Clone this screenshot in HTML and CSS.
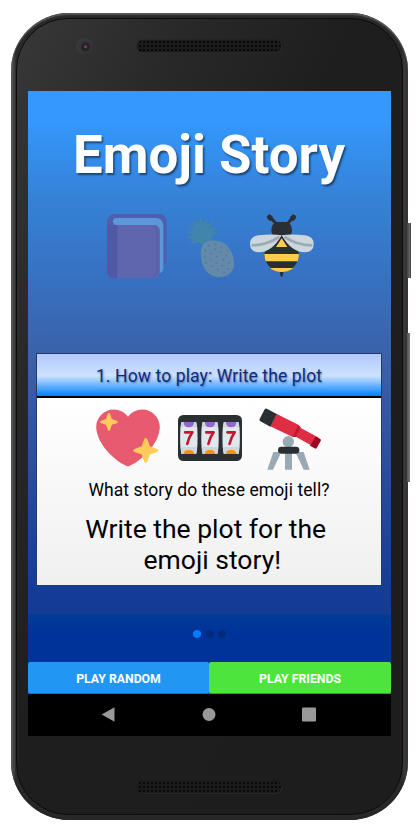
FILE: index.html
```html
<!DOCTYPE html>
<html lang="en">
<head>
<meta charset="utf-8">
<title>Emoji Story</title>
<link rel="stylesheet" href="styles.css">
</head>
<body>
<div class="phone">
  <span class="side power"></span>
  <span class="side volume"></span>
  <div class="face">
    <div class="top-bezel"><span class="camera"></span><span class="speaker"></span></div>
    <main class="screen">
      <section class="page">
        <h1>Emoji Story</h1>
        <div class="story">
          <svg viewBox="30 42 192 192">
            <path fill="#4e5fae" d="M62 42H190Q215 42 215 67V175Q215 194 202 200L190 210L54 234Q36 232 36 212V68Q36 42 62 42Z"/>
            <path fill="#5b98da" d="M65 54H181Q205 54 205 78V203Q205 218 188 221L192 90Q192 75 177 75H65Q54 75 54 65Q54 54 65 54Z"/>
            <path fill="#5f66ae" d="M54 75H172Q195 75 195 94V212Q195 234 172 234H56Q36 234 36 214V70Q40 75 54 75Z"/>
            <path fill="#5059a5" d="M36 70Q42 76 67 76V234H56Q36 234 36 214Z"/>
            <path fill="none" stroke="#555da6" stroke-width="4" d="M182 82Q187 88 187 95V211Q187 225 173 230"/>
          </svg>
          <svg viewBox="248.500 42 192 192">
            <path fill="#4184ac" d="M313 44L324 69L339 50L334 74L358 62L344 83L372 83L350 94L372 99L351 107L348 122L325 137L309 127L280 134L297 120L273 112L296 104L268 96L294 92L269 77L298 83L282 56L305 72L299 54L313 68Z"/>
            <path fill="#648aaa" d="M325 132C339 117 375 119 394 135C411 151 421 182 415 203C408 224 389 232 367 231C345 229 330 214 322 193C315 171 314 146 325 132Z"/>
            <g fill="none" stroke="#587ba2" stroke-width="5" stroke-linecap="round" stroke-dasharray="3 17"><path d="M340 137L402 170M329 151L405 190M327 169L402 208M332 188L390 220M360 132L397 152"/></g>
          </svg>
          <svg viewBox="465 42 192 192">
            <g fill="none" stroke="#292f33" stroke-width="9" stroke-linecap="round"><path d="M548 73Q538 68 532 58M573 73Q583 68 588 58"/></g>
            <ellipse cx="525" cy="53" rx="8" ry="10" transform="rotate(-35 525 53)" fill="#292f33"/>
            <ellipse cx="594" cy="53" rx="8" ry="10" transform="rotate(35 594 53)" fill="#292f33"/>
            <path fill="#292f33" d="M544 66H576Q591 72 591 91Q591 107 576 110H544Q529 107 529 90Q529 72 544 66ZM554 211H566L564 226Q560 236 556 226Z"/>
            <path fill="#292f33" d="M560 106L607 149Q618 167 606 187Q592 216 560 216Q528 216 514 187Q502 167 513 149Z"/>
            <path fill="#ffcc4d" d="M560 115L577 141H543ZM508 162H612Q612 174 608 184H512Q508 174 508 162ZM525 204H595Q581 216 560 216Q539 216 525 204Z"/>
            <path fill="#ccd6dd" d="M560 106Q531 101 491 106Q465 109 465 132Q465 156 491 157Q530 158 560 106ZM560 106Q589 101 630 106Q656 109 656 132Q656 156 630 157Q590 158 560 106Z"/>
            <path fill="none" stroke="#99aab5" stroke-width="8" stroke-linecap="round" d="M473 136Q515 135 550 112M648 136Q606 135 571 112"/>
          </svg>
        </div>
        <article class="card">
          <h2>1. How to play: Write the plot</h2>
          <div class="card-body">
            <div class="prompt">
              <svg viewBox="0 0 36 36">
                <path fill="#e75a70" d="M35.885 11.833c0-5.45-4.418-9.868-9.867-9.868-3.308 0-6.227 1.633-8.018 4.129-1.791-2.496-4.71-4.129-8.017-4.129-5.45 0-9.868 4.417-9.868 9.868 0 .772.098 1.52.266 2.241C1.751 22.587 11.216 31.568 18 34.034c6.783-2.466 16.249-11.447 17.617-19.959.17-.721.268-1.469.268-2.242z"/>
                <path id="spark" fill="#ffcc5b" d="M28 18Q28.700 18 29 19L30.300 22.700L34 24Q35 24.300 35 25Q35 25.700 34 26L30.300 27.300L29 31Q28.700 32 28 32Q27.300 32 27 31L25.700 27.300L22 26Q21 25.700 21 25Q21 24.300 22 24L25.700 22.700L27 19Q27.300 18 28 18Z"/>
                <use href="#spark" transform="translate(-12.600 -8.800) scale(.71)"/>
              </svg>
              <svg viewBox="0 0 36 36">
                <rect y="5" width="36" height="26" rx="3" fill="#292f33"/>
                <g id="reel">
                  <path fill="#e1e8ed" d="M2 9H10.200Q11 11 11 18T10.200 27H2Q1.200 25 1.200 18T2 9Z"/>
                  <path fill="#ccd6dd" d="M2 9H10.200L10.600 12H1.500ZM1.500 23H10.700L10.200 27H2Z"/>
                  <path fill="#9266cc" d="M3.200 9H9Q9 12 6.100 12T3.200 9Z"/>
                  <path fill="#f4900c" d="M3.200 27Q3.200 24.800 6.100 24.800T9 27Z"/>
                  <path fill="none" stroke="#be1931" stroke-width="1.500" stroke-linecap="round" stroke-linejoin="round" d="M4 14.800H8.100Q5.800 18 5.200 21.300"/>
                </g>
                <use href="#reel" x="11.900"/><use href="#reel" x="23.800"/>
              </svg>
              <svg viewBox="162 19 192 192">
                <circle cx="250" cy="126" r="17" fill="#99aab5"/>
                <path fill="#99aab5" d="M205 157H229L204 210H187ZM240 157H261V210H240ZM271 157H296L314 210H296Z"/>
                <rect x="219" y="141" width="64" height="21" rx="10" fill="#292f33"/>
                <path fill="#dd2e44" d="M214 42L280 75L286 84L332 109L318 137L274 112L263 112L196 80Z"/>
                <path fill="#be1931" d="M280 76L287 83L272 111L263 112Z"/>
                <path fill="#a0041e" d="M332 109L346 118Q349 121 347 124L335 145Q333 149 329 146L315 138Z"/>
                <path fill="#292f33" d="M187 28L215 43L196 81L166 65Q162 62 164 58L179 29Q182 25 187 28Z"/>
              </svg>
            </div>
            <p class="question">What story do these emoji tell?</p>
            <p class="instruction">Write the plot for the&nbsp;<br>&nbsp;emoji story!</p>
          </div>
        </article>
      </section>
      <div class="pager"><i class="active"></i><i></i><i></i></div>
      <div class="actions"><button>PLAY RANDOM</button><button class="friends">PLAY FRIENDS</button></div>
      <nav>
        <svg viewBox="0 0 14 15"><path d="M13.500 .3V14.800L.7 7.500Z"/></svg>
        <svg viewBox="0 0 14 14"><circle cx="7" cy="7" r="6.500"/></svg>
        <svg viewBox="0 0 14 14"><rect width="14" height="14" rx="1"/></svg>
      </nav>
    </main>
    <div class="bottom-bezel"><span class="speaker"></span></div>
  </div>
</div>
</body>
</html>
```

FILE: styles.css
```css
* { box-sizing: border-box; }
body { margin: 0; background: #fff; font-family: Roboto, sans-serif; }
h1, h2, p { margin: 0; }
svg { display: block; }
.phone {
  position: relative;
  width: 397px;
  height: 807px;
  margin: 13px 0 0 11px;
  padding: 5px;
  border-radius: 58px;
  background: linear-gradient(90deg, #606060 0, #414141 3px, #292929 5px, #292929 391px, #3b393a 393px, #343233 396px);
  box-shadow: inset 0 2px 1px #555, inset 0 -2px 1px #282628;
}
.face {
  height: 797px;
  padding: 0 12px;
  border: 1px solid #0c0c0c;
  border-radius: 52px;
  background: linear-gradient(115deg, #383838 0, #292929 22%, #1e1e1e 45%, #1d1d1e 100%);
}
.side { position: absolute; left: 396px; background: linear-gradient(90deg, #424242, #666 70%, #333); }
.power { top: 210px; width: 4px; height: 55px; }
.volume { top: 320px; width: 3px; height: 149px; background: linear-gradient(90deg, #555, #777); }
.top-bezel { height: 72px; padding: 20px 0 0 60px; display: flex; align-items: flex-start; }
.camera {
  width: 16px; height: 16px; margin: -1px 0 0 -13px; border-radius: 50%;
  background: radial-gradient(circle at 60% 55%, #70434b 0 1px, #25222a 2px 4px, #333235 5px, #39393a 8px);
}
.speaker {
  width: 144px; height: 12px; border-radius: 6px;
  background: radial-gradient(circle, #080808 0 1px, transparent 1.5px) 1px 0 / 4px 4px, #1b1b1b;
  box-shadow: 0 0 1px 0 #111, 1px 1px 0 #2c2c2c;
}
.top-bezel .speaker { margin-left: 45px; margin-top: 1px; }
.bottom-bezel { display: flex; justify-content: center; padding: 45px 1px 0 0; }
.screen { width: 363px; height: 645px; margin-left: -1px; display: flex; flex-direction: column; background: #039; overflow: hidden; }
.page {
  height: 523px; padding: 33px 9px 0;
  background: linear-gradient(#39f 0, #3399ff 25px, #3581d6 110px, #386fbf 195px, #3a62a8 265px, #284c9b 387px, #133d97 494px, #153b94 523px);
}
h1 { height: 62px; color: #fff; font-size: 52.800px; line-height: 63px; text-align: center; text-indent: -1px; text-shadow: 1.5px 1.5px 2px rgba(0,0,0,.5); white-space: nowrap; }
.story { display: flex; justify-content: center; gap: 8.5px; margin-top: 28px; }
.story svg, .prompt svg { width: 64px; height: 64px; }
.card { height: 233px; margin: 75px 0 0 -1px; border: 1px solid #263a68; background: #fff; }
h2 {
  height: 44px; border-bottom: 2px solid #000; color: #0b2c86;
  background: linear-gradient(#b3c8ff 0, #cce2ff 52%, #0080ff 100%);
  font-size: 17.500px; letter-spacing: .12px; font-weight: 400; line-height: 45px; text-align: center; text-shadow: 1px 1px 2px rgba(0,0,0,.4);
}
.card-body { height: 187px; padding-top: 8px; background: linear-gradient(#fff, #f0f0f0); }
.prompt { display: flex; justify-content: center; gap: 17.500px; padding-left: 1px; }
.question { height: 20px; margin-top: 10px; font-size: 17.500px; letter-spacing: .08px; line-height: 20px; text-align: center; }
.instruction { margin-top: 13px; font-size: 26.500px; line-height: 31px; text-align: center; }
.pager { height: 48px; display: flex; justify-content: center; gap: 4.300px; padding: 16px 0 0; background: linear-gradient(#003c96, #039 35%); }
.pager i { width: 8px; height: 8px; border-radius: 50%; background: #002b7c; }
.pager .active { background: #007aff; }
.actions { height: 32px; display: flex; }
button { flex: 1; padding: 1px 0 0; border: 0; border-radius: 2px; background: #2196f3; box-shadow: inset 0 -1px #176ebb; color: #fff; font: 700 12.250px Roboto, sans-serif; }
button:first-child { flex: 0 0 181px; }
.friends { background: #4de53b; box-shadow: inset 0 -1px #349c40; }
nav { height: 42px; display: flex; justify-content: space-between; align-items: center; padding: 0 75px 1px 73px; background: #000; fill: #999; }
nav svg { width: 14px; height: 15px; }
```
